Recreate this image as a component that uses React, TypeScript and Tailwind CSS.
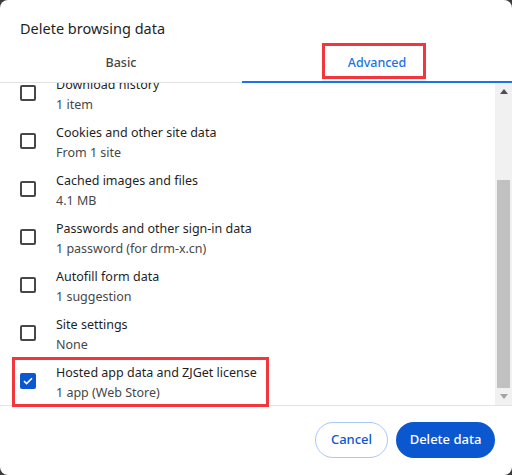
import { useLayoutEffect, useRef } from "react";

const rows = [
    { title: "Browsing history", sub: "None", checked: false },
    { title: "Download history", sub: "1 item", checked: false },
    { title: "Cookies and other site data", sub: "From 1 site", checked: false },
    { title: "Cached images and files", sub: "4.1 MB", checked: false },
    { title: "Passwords and other sign-in data", sub: "1 password (for drm-x.cn)", checked: false },
    { title: "Autofill form data", sub: "1 suggestion", checked: false },
    { title: "Site settings", sub: "None", checked: false },
    { title: "Hosted app data and ZJGet license", sub: "1 app (Web Store)", checked: true },
];

function Checkbox({ checked }: { checked: boolean }) {
    if (checked) {
        return (
            <div className="w-4 h-4 rounded-[2px] bg-[#0b57d0] flex items-center justify-center">
                <svg width="10" height="8" viewBox="0 0 10 8" fill="none">
                    <path d="M1 4.2 3.6 6.6 9 1.2" stroke="white" strokeWidth="1.6" />
                </svg>
            </div>
        );
    }
    return <div className="w-4 h-4 rounded-[2px] border-2 border-[#474747]" />;
}

export default function App() {
    const listRef = useRef<HTMLDivElement>(null);

    useLayoutEffect(() => {
        if (listRef.current) listRef.current.scrollTop = listRef.current.scrollHeight;
    }, []);

    return (
        <div className="w-[512px] h-[475px] bg-[#3b3b3b] font-['Noto_Sans',sans-serif]">
            <div className="w-full h-full bg-white rounded-lg flex flex-col overflow-hidden">
                <div className="pl-5 pt-[18px] h-[42px] text-[14.5px] text-[#1f1f1f] leading-5">
                    Delete browsing data
                </div>

                <div className="flex h-[41px] pt-[3px] border-b border-[#e3e3e3]">
                    <div className="w-[242px] flex items-center justify-center text-[12.5px] font-medium text-[#474747]">
                        Basic
                    </div>
                    <div className="flex-1 relative flex items-center justify-center text-[12.5px] font-medium text-[#1a73e8]">
                        Advanced
                        <div className="absolute left-[80px] top-[-2px] w-[104px] h-[36px] border-[3px] border-[#f2363b]" />
                        <div className="absolute left-0 right-0 bottom-[-1px] h-[2px] bg-[#1a73e8]" />
                    </div>
                </div>

                <div className="relative flex h-[323px] border-b border-[#e3e3e3]">
                    <div ref={listRef} className="flex-1 overflow-y-auto [scrollbar-width:none]">
                        {rows.map((r) => (
                            <div key={r.title} className="h-12 flex items-center pl-5">
                                <Checkbox checked={r.checked} />
                                <div className="ml-5 flex flex-col pt-[3px] text-[12.5px] leading-5">
                                    <span className="text-[#1f1f1f]">{r.title}</span>
                                    <span className="text-[#474747]">{r.sub}</span>
                                </div>
                            </div>
                        ))}
                    </div>

                    <div className="w-[17px] bg-[#f1f1f1] flex flex-col">
                        <div className="h-[17px] flex items-center justify-center">
                            <svg width="8" height="5" viewBox="0 0 8 5">
                                <path d="M0 5 4 0 8 5Z" fill="#505050" />
                            </svg>
                        </div>
                        <div className="h-[80px]" />
                        <div className="h-[209px] mx-[2px] bg-[#c1c1c1]" />
                        <div className="h-[17px] flex items-center justify-center">
                            <svg width="8" height="5" viewBox="0 0 8 5">
                                <path d="M0 0 8 0 4 5Z" fill="#a3a3a3" />
                            </svg>
                        </div>
                    </div>

                    <div className="absolute left-[12px] top-[274px] w-[257px] h-[50px] border-[3px] border-[#f2363b]" />
                </div>

                <div className="flex-1 flex justify-end items-start pt-4 pr-[17px] gap-2 text-[13px] font-medium">
                    <button className="h-9 w-[73px] rounded-full border border-[#a8c7fa] text-[#0b57d0]">
                        Cancel
                    </button>
                    <button className="h-9 w-[99px] rounded-full bg-[#0b57d0] text-white">
                        Delete data
                    </button>
                </div>
            </div>
        </div>
    );
}
